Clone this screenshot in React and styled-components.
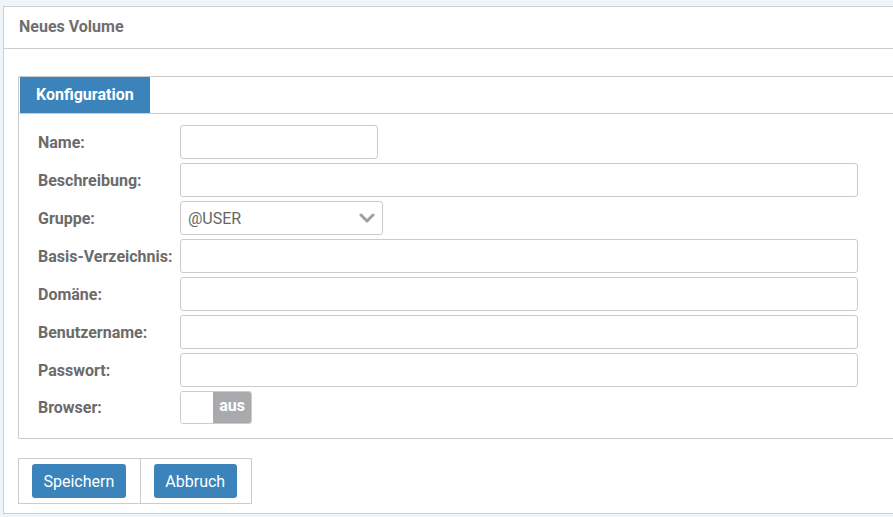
import React from "react";
import styled, { createGlobalStyle } from "styled-components";

const Global = createGlobalStyle`
  html, body { margin: 0; padding: 0; background: #eff4f8; overflow: hidden; }
  body { font-family: Roboto, "Liberation Sans", Arial, sans-serif; font-size: 16px; color: #666; }
  * { box-sizing: border-box; }
`;

const Page = styled.div`
  padding: 6px 0 0 3px;
  width: 940px;
`;

const Panel = styled.div`
  background: #fff;
  border: 1px solid #c9d0d6;
  border-right: none;
`;

const PanelHeader = styled.div`
  height: 42px;
  display: flex;
  align-items: center;
  padding: 0 15px 2px;
  border-bottom: 1px solid #c9ced3;
  font-weight: 700;
  font-size: 16px;
  color: #6f6f6f;
`;

const PanelBody = styled.div`
  padding: 27px 0 9px 14px;
`;

const Box = styled.div`
  border: 1px solid #ccc;
  border-right: none;
  border-radius: 2px 0 0 2px;
`;

const TabBar = styled.div`
  display: flex;
  padding: 0 0 0 1px;
  border-bottom: 1px solid #ccc;
`;

const Tab = styled.div`
  background: #3a84bb;
  color: #fff;
  font-weight: 700;
  font-size: 16px;
  height: 36px;
  padding: 0 16px 1px;
  display: flex;
  align-items: center;
  justify-content: center;
`;

const Form = styled.div`
  display: grid;
  grid-template-columns: 142px auto;
  row-gap: 4px;
  padding: 11px 0 14px 19px;
  align-items: center;
`;

const Label = styled.div`
  font-weight: 700;
  color: #6b6b6b;
  font-size: 16px;
  white-space: nowrap;
`;

const Input = styled.input`
  width: ${(p) => p.$w}px;
  height: 34px;
  border: 1px solid #ccc;
  border-radius: 3px;
  padding: 0 8px;
  font-family: inherit;
  font-size: 16px;
  background: #fff;
  outline: none;
  justify-self: start;
`;

const SelectBox = styled.div`
  width: 203px;
  height: 34px;
  border: 1px solid #ccc;
  border-radius: 3px;
  display: flex;
  align-items: center;
  justify-content: space-between;
  padding: 0 7px 0 7px;
  font-size: 16px;
  color: #666;
  justify-self: start;
`;

const Toggle = styled.div`
  width: 72px;
  height: 33px;
  border: 1px solid #ccc;
  border-radius: 3px;
  display: flex;
  overflow: hidden;
  justify-self: start;
`;

const ToggleKnob = styled.div`
  width: 32px;
  background: #fff;
`;

const ToggleLabel = styled.div`
  flex: 1;
  background: #a8aaad;
  color: #fff;
  font-weight: 700;
  font-size: 16px;
  display: flex;
  align-items: center;
  justify-content: center;
  padding-bottom: 4px;
`;

const ButtonBar = styled.div`
  display: inline-flex;
  margin-top: 19px;
  border: 1px solid #ccc;
`;

const ButtonCell = styled.div`
  padding: 5px 14px 5px 13px;
  & + & { border-left: 1px solid #ccc; }
`;

const Button = styled.button`
  height: 34px;
  padding: 0 11.5px;
  background: #3a84bb;
  color: #fff;
  border: none;
  border-radius: 3px;
  font-family: inherit;
  font-size: 16px;
  cursor: pointer;
`;

const Chevron = () => (
  <svg width="16" height="12" viewBox="0 0 16 12">
    <path d="M2 3 L8 9 L14 3" fill="none" stroke="#a0a0a0" strokeWidth="3" strokeLinecap="round" strokeLinejoin="round" />
  </svg>
);

const fields = [
  ["Basis-Verzeichnis:"],
  ["Domäne:"],
  ["Benutzername:"],
  ["Passwort:", "password"],
];

export default function App() {
  return (
    <Page>
      <Global />
      <Panel>
        <PanelHeader>Neues Volume</PanelHeader>
        <PanelBody>
          <Box>
            <TabBar>
              <Tab>Konfiguration</Tab>
            </TabBar>
            <Form>
              <Label>Name:</Label>
              <Input $w={198} />
              <Label>Beschreibung:</Label>
              <Input $w={678} />
              <Label>Gruppe:</Label>
              <SelectBox>
                <span>@USER</span>
                <Chevron />
              </SelectBox>
              {fields.map(([l, t]) => (
                <React.Fragment key={l}>
                  <Label>{l}</Label>
                  <Input $w={678} type={t || "text"} />
                </React.Fragment>
              ))}
              <Label>Browser:</Label>
              <Toggle>
                <ToggleKnob />
                <ToggleLabel>aus</ToggleLabel>
              </Toggle>
            </Form>
          </Box>
          <ButtonBar>
            <ButtonCell>
              <Button>Speichern</Button>
            </ButtonCell>
            <ButtonCell>
              <Button>Abbruch</Button>
            </ButtonCell>
          </ButtonBar>
        </PanelBody>
      </Panel>
    </Page>
  );
}
